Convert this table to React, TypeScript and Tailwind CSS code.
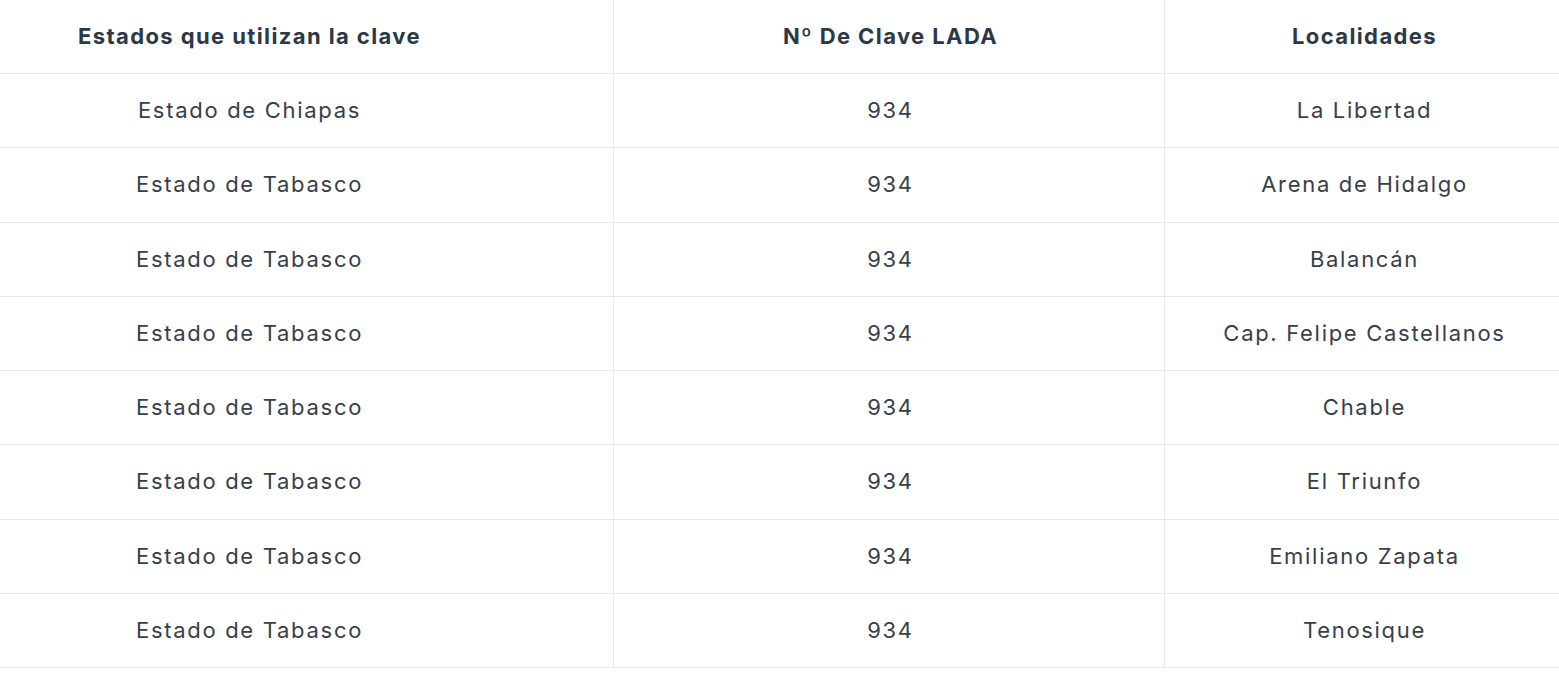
import React from "react";

const rows: [string, string, string][] = [
  ["Estado de Chiapas", "934", "La Libertad"],
  ["Estado de Tabasco", "934", "Arena de Hidalgo"],
  ["Estado de Tabasco", "934", "Balancán"],
  ["Estado de Tabasco", "934", "Cap. Felipe Castellanos"],
  ["Estado de Tabasco", "934", "Chable"],
  ["Estado de Tabasco", "934", "El Triunfo"],
  ["Estado de Tabasco", "934", "Emiliano Zapata"],
  ["Estado de Tabasco", "934", "Tenosique"],
];

const line = "border-[#e6e8eb]";

export default function App() {
  return (
    <div className="w-[1559px] h-[673px] bg-white overflow-hidden font-['Inter',sans-serif]">
      <div className="grid grid-cols-[614px_551px_394px]">
        <div className={`h-[74px] border-b border-r ${line} flex items-center justify-center pr-[114px] text-[22px] tracking-[1.4px] font-bold text-[#2b3847]`}>
          Estados que utilizan la clave
        </div>
        <div className={`h-[74px] border-b border-r ${line} flex items-center justify-center pl-[3px] text-[22px] tracking-[1.4px] font-bold text-[#2b3847]`}>
          Nº De Clave LADA
        </div>
        <div className={`h-[74px] border-b ${line} flex items-center justify-center pl-[5px] text-[22px] tracking-[1.4px] font-bold text-[#2b3847]`}>
          Localidades
        </div>
        {rows.map((r, i) => (
          <React.Fragment key={i}>
            <div className={`h-[74.25px] border-b border-r ${line} flex items-center justify-center pr-[114px] text-[22px] tracking-[1.7px] text-[#36404c]`}>
              {r[0]}
            </div>
            <div className={`h-[74.25px] border-b border-r ${line} flex items-center justify-center pl-[3px] text-[22px] tracking-[1.7px] text-[#36404c]`}>
              {r[1]}
            </div>
            <div className={`h-[74.25px] border-b ${line} flex items-center justify-center pl-[5px] text-[22px] tracking-[1.7px] text-[#36404c]`}>
              {r[2]}
            </div>
          </React.Fragment>
        ))}
      </div>
    </div>
  );
}
